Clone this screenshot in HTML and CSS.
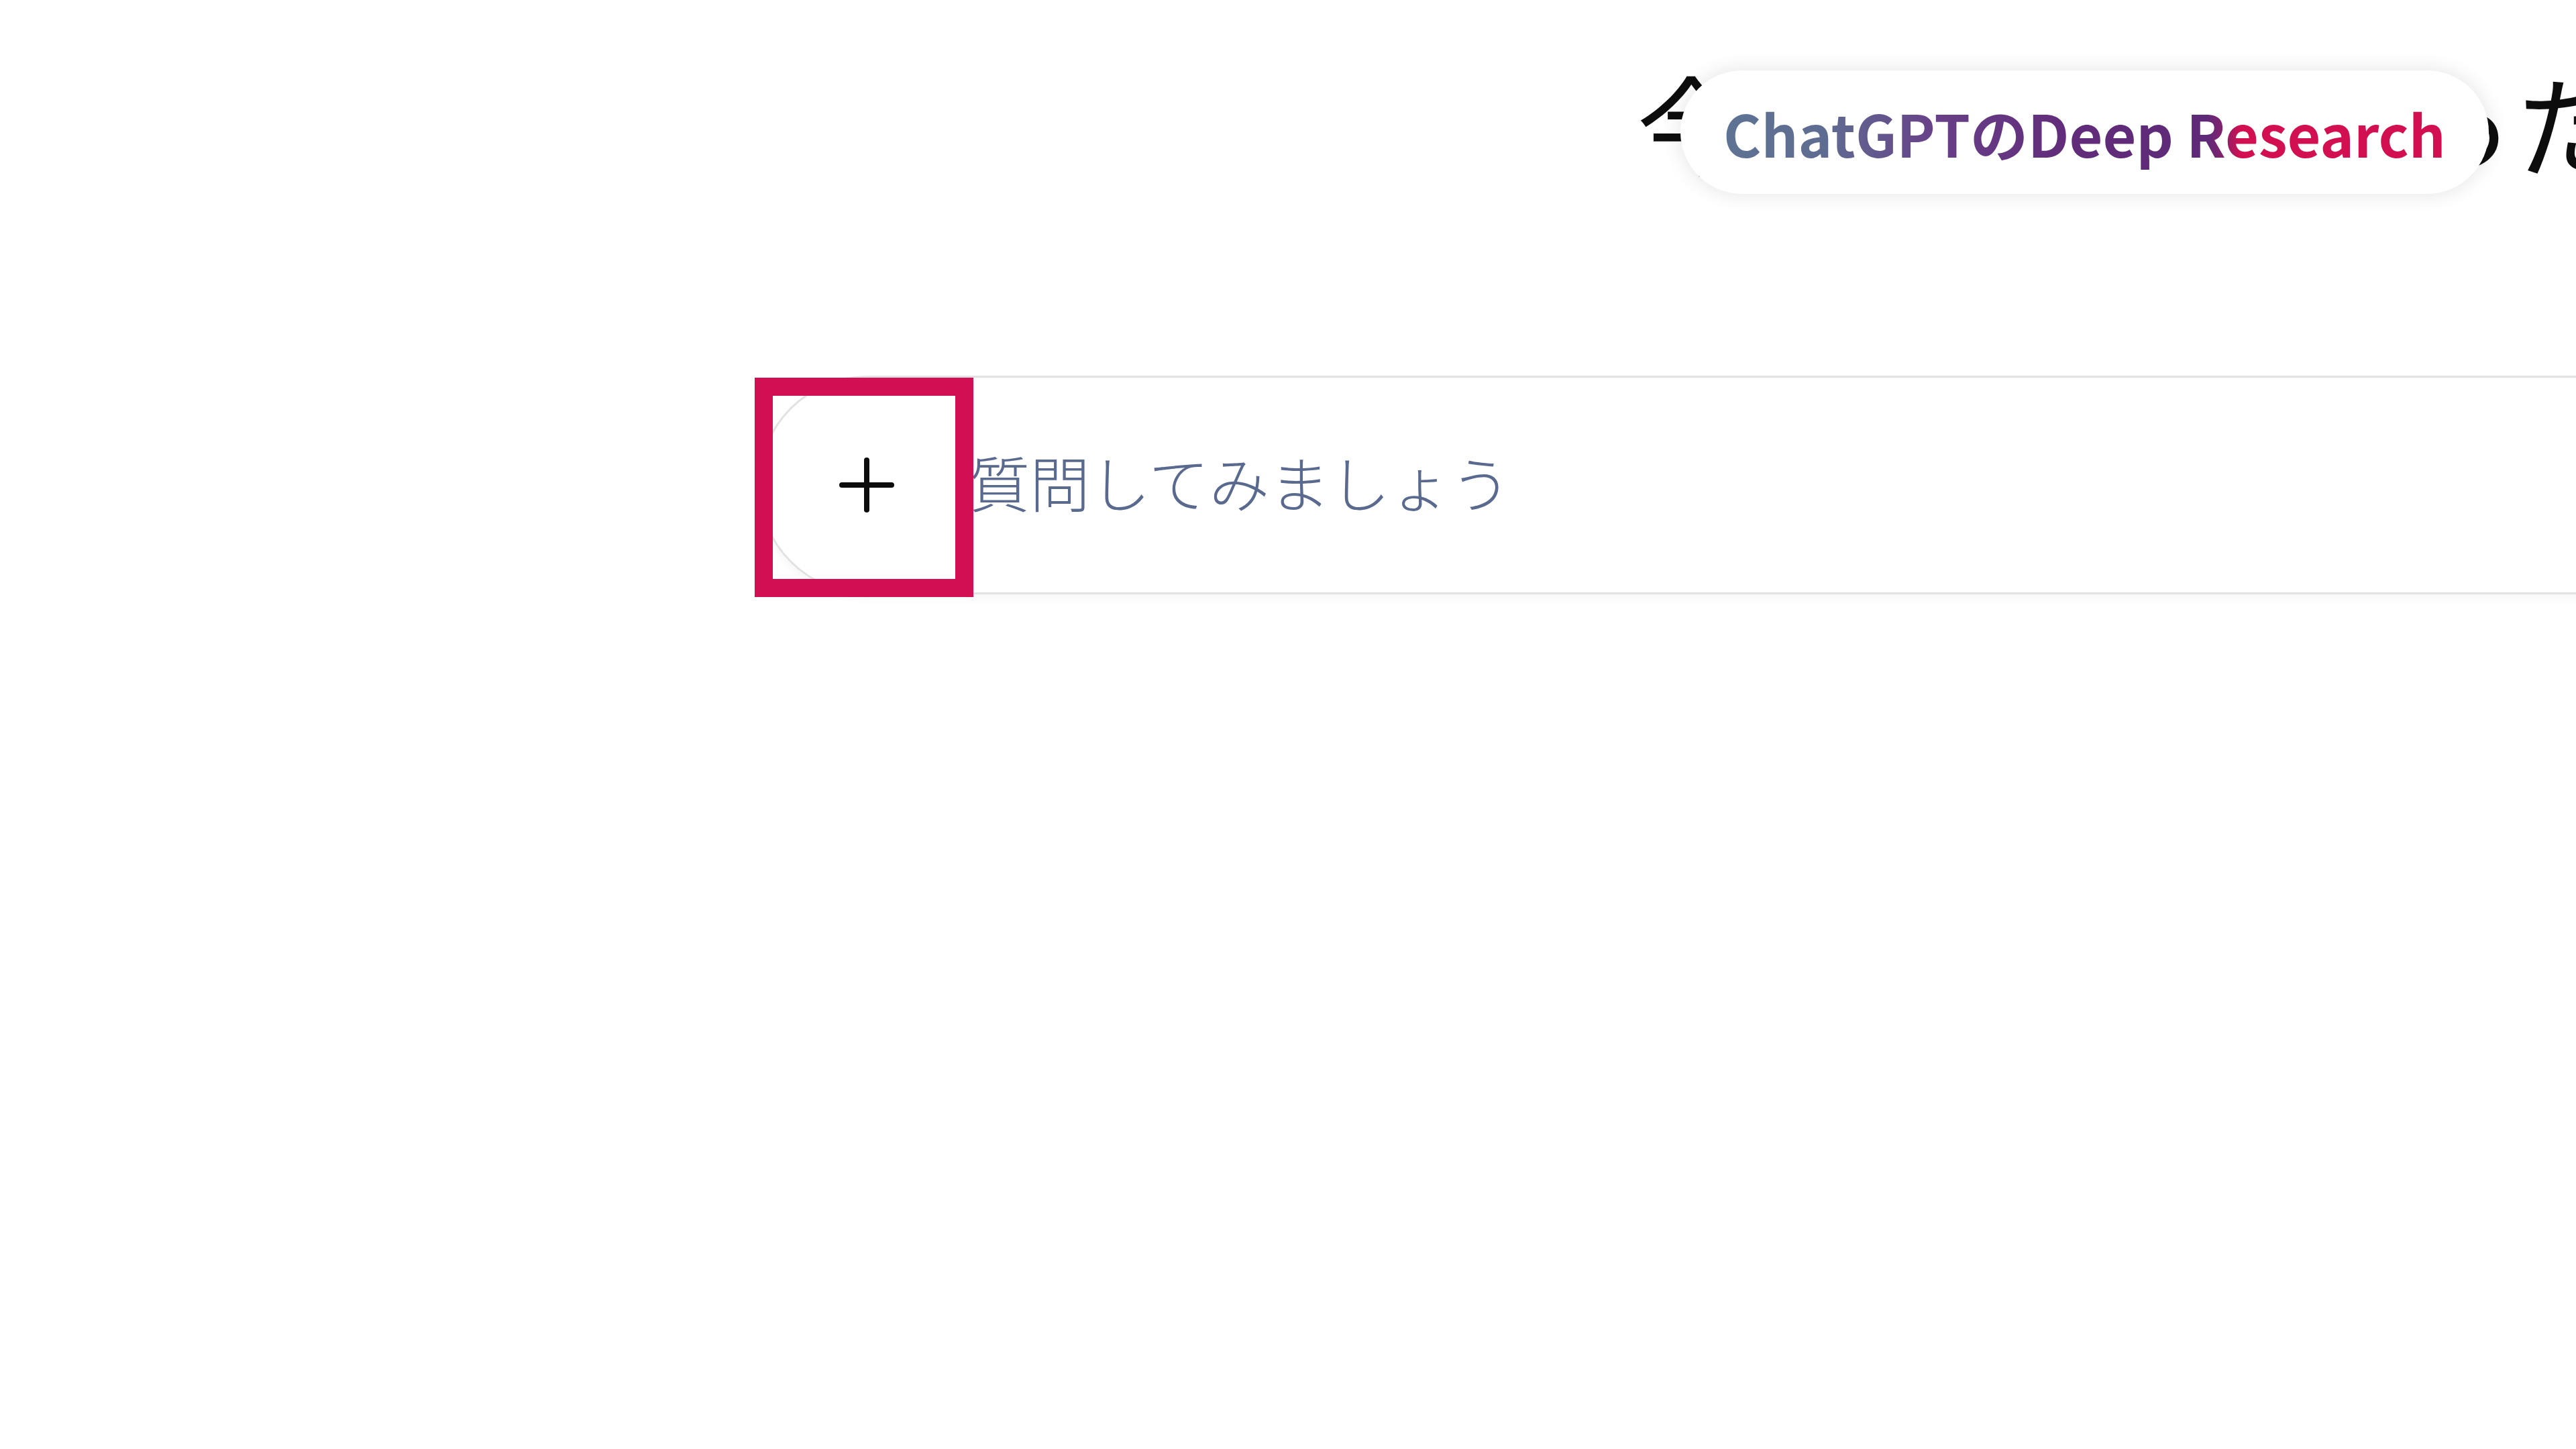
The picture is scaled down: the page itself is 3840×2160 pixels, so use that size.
FILE: index.html
```html
<!DOCTYPE html>
<html lang="ja">
<head>
<meta charset="utf-8">
<title>ChatGPTのDeep Research</title>
<link rel="stylesheet" href="styles.css">
</head>
<body>
<main class="stage">
  <header class="hero">
    <h1 class="greeting">今日はなにがあったの？</h1>
    <div class="badge"><span class="badge-text">ChatGPTのDeep Research</span></div>
  </header>
  <section class="composer">
    <button class="plus" type="button" aria-label="追加">
      <svg viewBox="0 0 82 82" width="82" height="82" aria-hidden="true">
        <line x1="41" y1="4" x2="41" y2="78" />
        <line x1="4" y1="41" x2="78" y2="41" />
      </svg>
    </button>
    <span class="placeholder">質問してみましょう</span>
    <div class="highlight"></div>
  </section>
</main>
</body>
</html>
```
FILE: styles.css
```css
html, body {
  margin: 0;
  padding: 0;
  background: #ffffff;
}

.stage {
  width: 3840px;
  height: 2160px;
  overflow: hidden;
  background: #ffffff;
  font-family: "Noto Sans CJK JP", "Noto Sans", sans-serif;
}

.hero {
  position: relative;
  height: 560px;
  padding-left: 2440px;
  box-sizing: border-box;
}

.greeting {
  margin: 0;
  padding-top: 99px;
  font-size: 164px;
  line-height: 1;
  font-weight: 400;
  color: #0d0d0d;
  white-space: nowrap;
}

.badge {
  position: absolute;
  left: 2505px;
  top: 105px;
  width: 1205px;
  height: 184px;
  border-radius: 92px;
  background: #ffffff;
  box-shadow: 0 0 26px 6px rgba(0, 0, 0, 0.08);
  display: flex;
  align-items: center;
  justify-content: center;
}

.badge-text {
  font-size: 86px;
  font-weight: 700;
  white-space: nowrap;
  background: linear-gradient(90deg, #5e7394 0%, #5f6c91 14%, #683f88 30%, #612c7a 48%, #5e2a78 67%, #8a206a 69.5%, #d20f50 71.5%, #d20f50 100%);
  -webkit-background-clip: text;
  background-clip: text;
  color: transparent;
}

.composer {
  position: relative;
  margin-left: 1130px;
  width: 3000px;
  height: 326px;
  box-sizing: border-box;
  border: 3px solid #e2e2e2;
  border-radius: 163px;
  box-shadow: 0 6px 14px rgba(0, 0, 0, 0.04);
  display: flex;
  align-items: center;
}

.plus {
  width: 312px;
  height: 320px;
  flex: none;
  border: none;
  background: transparent;
  padding: 0 0 0 6px;
  display: flex;
  align-items: center;
  justify-content: center;
}

.plus svg line {
  stroke: #0d0d0d;
  stroke-width: 8;
  stroke-linecap: round;
}

.placeholder {
  font-size: 90px;
  font-weight: 300;
  color: #5a6a8e;
  white-space: nowrap;
  line-height: 1;
  margin-bottom: 12px;
}

.highlight {
  position: absolute;
  left: -8px;
  top: 0;
  width: 326px;
  height: 327px;
  box-sizing: border-box;
  border: 27px solid #d10f52;
}
```
